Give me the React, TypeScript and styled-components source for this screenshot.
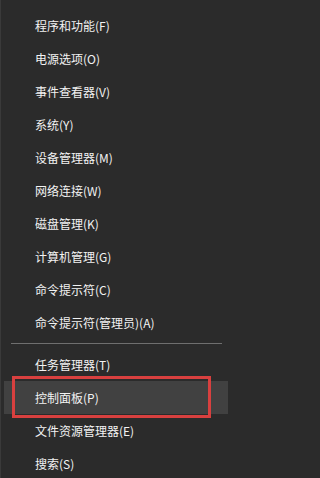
import React from 'react';
import styled, { createGlobalStyle } from 'styled-components';

const GlobalStyle = createGlobalStyle`
  html, body {
    margin: 0;
    padding: 0;
    background: #2b2b2b;
  }
`;

const Menu = styled.div`
  width: 231px;
  height: 478px;
  box-sizing: border-box;
  padding-top: 9px;
  background: #2b2b2b;
  border-left: 1px solid #3a3a3a;
  overflow: hidden;
  font-family: 'Noto Sans CJK SC', 'Noto Sans', sans-serif;
`;

const Item = styled.div<{ $active?: boolean }>`
  position: relative;
  height: 33px;
  display: flex;
  align-items: center;
  padding-left: 34px;
  margin-right: ${p => (p.$active ? '3px' : '0')};
  margin-left: ${p => (p.$active ? '3px' : '0')};
  padding-left: ${p => (p.$active ? '31px' : '34px')};
  background: ${p => (p.$active ? '#414141' : 'transparent')};
  color: #f2f2f2;
  font-size: 12px;
  line-height: 1;
  white-space: nowrap;
`;

const Separator = styled.div`
  height: 1px;
  margin: 4px 9px 4px 10px;
  background: #6f6f6f;
`;

const Annotation = styled.div`
  position: absolute;
  left: 8px;
  width: 199px;
  top: -5px;
  bottom: -4px;
  box-sizing: border-box;
  border: 3px solid #d8403f;
  pointer-events: none;
`;

const upper = [
  '程序和功能(F)',
  '电源选项(O)',
  '事件查看器(V)',
  '系统(Y)',
  '设备管理器(M)',
  '网络连接(W)',
  '磁盘管理(K)',
  '计算机管理(G)',
  '命令提示符(C)',
  '命令提示符(管理员)(A)',
];

const lower = ['任务管理器(T)', '控制面板(P)', '文件资源管理器(E)', '搜索(S)'];

export default function App() {
  return (
    <>
      <GlobalStyle />
      <Menu>
        {upper.map(label => (
          <Item key={label}>{label}</Item>
        ))}
        <Separator />
        {lower.map(label => {
          const active = label === '控制面板(P)';
          return (
            <Item key={label} $active={active}>
              {label}
              {active && <Annotation />}
            </Item>
          );
        })}
      </Menu>
    </>
  );
}
